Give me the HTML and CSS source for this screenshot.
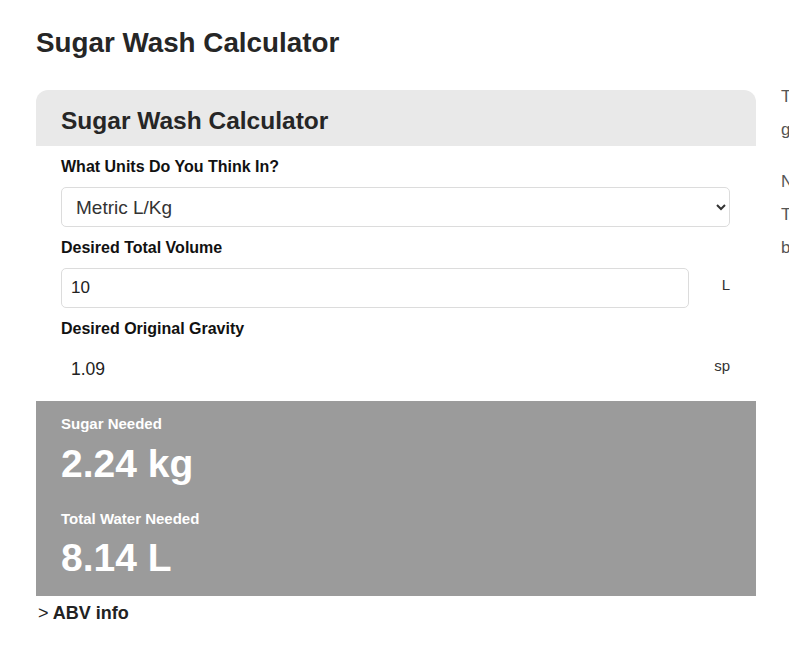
FILE: index.html
```html
<!DOCTYPE html>
<html>
  <head>
    <meta name="viewport" content="width=device-width, initial-scale=1.0" />
    <link rel="stylesheet" href="styles.css">
  </head>

  <body>
    <div class="page">
      <h1 class="page-title">Sugar Wash Calculator</h1>

      <div class="layout">
        <div class="main">
          <!--calculator card-->
          <div class="calc-card">
            <div class="calc-header">
              <h2>Sugar Wash Calculator</h2>
            </div>

            <div class="calc-body">
              <label class="field-label">What Units Do You Think In?</label>
              <select class="field-select">
                <option>Metric L/Kg</option>
                <option>Imperial Gal/Lb</option>
              </select>

              <label class="field-label">Desired Total Volume</label>
              <div class="field-row">
                <input class="field-input" type="text" value="10">
                <span class="field-unit">L</span>
              </div>

              <label class="field-label">Desired Original Gravity</label>
              <div class="field-row">
                <input class="field-input plain" type="text" value="1.09">
                <span class="field-unit">sp</span>
              </div>
            </div>

            <!--results-->
            <div class="calc-result">
              <div class="result-label">Sugar Needed</div>
              <div class="result-value">2.24 kg</div>
              <div class="result-label">Total Water Needed</div>
              <div class="result-value">8.14 L</div>
            </div>
          </div>

          <div class="abv-toggle"><span class="caret">&gt;</span> ABV info</div>
        </div>

        <div class="side">
          <p>The calculator works out the sugar<br>given a target volume and gravity.</p>
          <p>Note the volume is the finished wash.<br>The water figure is lower because the<br>bulk of the sugar takes up space.</p>
        </div>
      </div>
    </div>
  </body>
</html>
```

FILE: styles.css
```css
html,
body {
  overflow-x: hidden;
}

body {
  margin: 0;
  font-family: "Liberation Sans", Arial, sans-serif;
  color: #222;
  background: #fff;
}

.page {
  width: 1100px;
  padding: 26px 36px;
}

.page-title {
  margin: 0 0 20px 0;
  font-size: 27.8px;
  line-height: 34px;
  font-weight: bold;
  color: #262626;
}

.layout {
  display: grid;
  grid-template-columns: 720px 320px;
  gap: 25px;
}

/*card*/
.calc-card {
  margin-top: 10px;
}

.calc-header {
  background-color: #e9e9e9;
  border-radius: 12px 12px 0 0;
  padding: 17px 25px 11px 25px;
}

.calc-header h2 {
  margin: 0;
  font-size: 24.5px;
  line-height: 28px;
  color: #262626;
}

.calc-body {
  display: flex;
  flex-direction: column;
  padding: 0 26px 12px 25px;
}

.field-label {
  display: block;
  margin: 11px 0 10px 0;
  font-size: 16px;
  line-height: 20px;
  font-weight: bold;
  color: #111;
}

.field-select {
  height: 40px;
  padding: 0 14px 0 10px;
  font-family: "Liberation Sans", Arial, sans-serif;
  font-size: 19px;
  color: #333;
  background: #fff;
  border: 1px solid #dcdcdc;
  border-radius: 5px;
}

.field-row {
  display: flex;
  align-items: flex-start;
}

.field-input {
  flex: 1;
  height: 40px;
  box-sizing: border-box;
  padding: 0 9px;
  font-family: "Liberation Sans", Arial, sans-serif;
  font-size: 17px;
  color: #222;
  border: 1px solid #dcdcdc;
  border-radius: 5px;
  outline: none;
}

.field-input.plain {
  border-color: transparent;
  font-size: 17.5px;
}

.field-unit {
  width: 41px;
  padding-top: 8px;
  line-height: 18px;
  text-align: right;
  font-size: 15px;
  color: #333;
}

/*results box*/
.calc-result {
  background-color: #9b9b9b;
  color: #fff;
  padding: 13px 25px 15px 25px;
}

.result-label {
  font-size: 15px;
  line-height: 20px;
  font-weight: bold;
}

.result-value {
  font-size: 39px;
  line-height: 46px;
  font-weight: bold;
  margin: 7px 0 22px 0;
}

.result-value:last-child {
  margin: 6px 0 0 0;
}

.abv-toggle {
  margin-top: 6px;
  padding-left: 2px;
  font-size: 18px;
  line-height: 22px;
  font-weight: bold;
  color: #222;
}

.abv-toggle .caret {
  font-weight: normal;
}

/*side text*/
.side p {
  margin: 0 0 19px 0;
  font-size: 17px;
  line-height: 33px;
  color: #555;
  white-space: nowrap;
}
```
